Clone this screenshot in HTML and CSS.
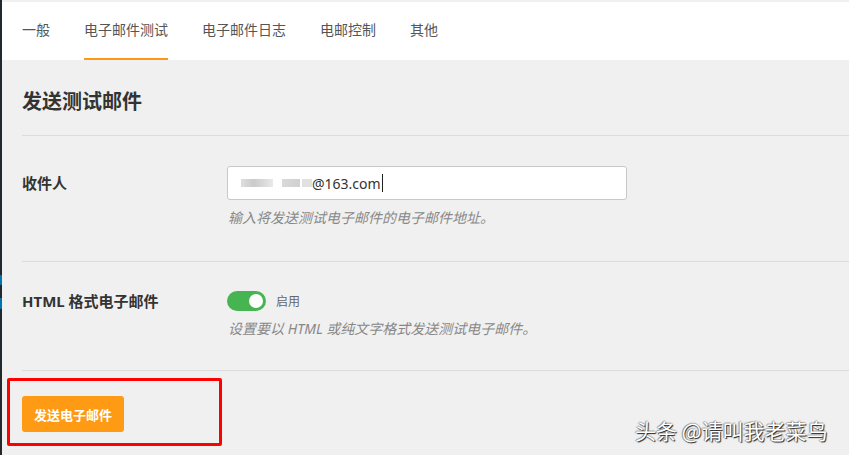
FILE: index.html
```html
<!DOCTYPE html>
<html lang="zh-CN">
<head>
<meta charset="utf-8">
<link rel="stylesheet" href="styles.css">
</head>
<body>
<div class="frame">
  <div class="adminbar"><span class="blue b1"></span><span class="blue b2"></span></div>
  <div class="page">
    <nav class="tabs">
      <a class="tab">一般</a>
      <a class="tab active">电子邮件测试</a>
      <a class="tab">电子邮件日志</a>
      <a class="tab">电邮控制</a>
      <a class="tab">其他</a>
    </nav>
    <main class="content">
      <h2 class="title">发送测试邮件</h2>
      <div class="row row-to">
        <div class="label">收件人</div>
        <div class="field">
          <div class="input"><span class="blur b-a"></span><span class="blur b-b"></span><span class="blur b-c"></span><span class="email">@163.com</span><span class="caret"></span></div>
          <p class="help">输入将发送测试电子邮件的电子邮件地址。</p>
        </div>
      </div>
      <div class="row row-html">
        <div class="label">HTML 格式电子邮件</div>
        <div class="field">
          <div class="switch-line"><span class="switch"><span class="knob"></span></span><span class="switch-text">启用</span></div>
          <p class="help">设置要以 HTML 或纯文字格式发送测试电子邮件。</p>
        </div>
      </div>
      <div class="actions">
        <button class="btn">发送电子邮件</button>
        <span class="highlight"></span>
      </div>
    </main>
  </div>
  <div class="watermark">头条 @请叫我老菜鸟</div>
</div>
</body>
</html>
```

FILE: styles.css
```css
* { box-sizing: border-box; }
html, body { margin: 0; padding: 0; }
body {
  width: 849px;
  height: 455px;
  overflow: hidden;
  background: #f0f0f0;
  font-family: "Noto Sans", "Noto Sans CJK SC", sans-serif;
  color: #333;
}
.frame {
  position: relative;
  display: flex;
  height: 455px;
}
.adminbar {
  position: relative;
  width: 2px;
  flex: none;
  background: #23282d;
}
.blue {
  position: absolute;
  left: 0;
  width: 2px;
  background: #0073aa;
}
.b1 { top: 275px; height: 10px; }
.b2 { top: 298px; height: 11px; }
.page {
  flex: 1;
  display: flex;
  flex-direction: column;
  padding-top: 2px;
}
.tabs {
  display: flex;
  gap: 34px;
  height: 58px;
  background: #fff;
  padding-left: 20px;
}
.tab {
  font-size: 14px;
  color: #555;
  height: 58px;
  border-bottom: 2px solid transparent;
  line-height: 56px;
}
.tab.active {
  border-bottom-color: #ff9615;
}
.content {
  padding: 0 0 0 20px;
  flex: 1;
}
.title {
  margin: 0;
  font-size: 20px;
  font-weight: 700;
  color: #333;
  height: 76px;
  line-height: 84px;
  border-bottom: 1px solid #dcdcdc;
}
.row {
  display: flex;
  border-bottom: 1px solid #dcdcdc;
}
.row-to { height: 126px; padding-top: 30px; }
.row-html { height: 109px; padding-top: 29px; }
.label {
  width: 205px;
  flex: none;
  font-size: 15px;
  font-weight: 700;
  color: #333;
  line-height: 34px;
}
.row-html .label { line-height: 20px; }
.field { flex: none; }
.input {
  width: 400px;
  height: 34px;
  background: #fff;
  border: 1px solid #c8c8c8;
  border-radius: 3px;
  display: flex;
  align-items: center;
  padding-left: 13px;
}
.blur {
  display: inline-block;
  height: 8px;
  background: #c9c9c9;
  opacity: 0.8;
}
.b-a { width: 32px; background: linear-gradient(90deg, #d6d6d6, #bdbdbd 40%, #d0d0d0 70%, #e4e4e4); margin-right: 9px; }
.b-b { width: 18px; background: linear-gradient(90deg, #d0d0d0, #c4c4c4); margin-right: 2px; }
.b-c { width: 10px; background: #d9d9d9; }
.email {
  font-size: 14px;
  color: #333;
}
.caret {
  display: inline-block;
  width: 1px;
  height: 18px;
  background: #222;
  margin-left: 1px;
}
.help {
  margin: 9px 0 0 1px;
  font-size: 14px;
  font-style: italic;
  color: #888;
  line-height: 18px;
}
.switch-line {
  display: flex;
  align-items: center;
  height: 20px;
}
.switch {
  position: relative;
  width: 39px;
  height: 20px;
  border-radius: 10px;
  background: #46b450;
}
.knob {
  position: absolute;
  right: 3px;
  top: 3px;
  width: 14px;
  height: 14px;
  border-radius: 50%;
  background: #fff;
}
.switch-text {
  margin-left: 10px;
  font-size: 12px;
  color: #666;
}
.actions {
  position: relative;
  padding-top: 25px;
}
.btn {
  height: 36px;
  padding: 0 12px;
  border: none;
  border-radius: 3px;
  background: #ff9a14;
  color: #fff;
  font-family: "Noto Sans", "Noto Sans CJK SC", sans-serif;
  font-size: 13px;
  font-weight: 700;
}
.highlight {
  position: absolute;
  left: -15px;
  top: 7px;
  width: 215px;
  height: 68px;
  border: 3px solid #ff0000;
  border-radius: 2px;
}
.watermark {
  position: absolute;
  left: 635px;
  top: 415px;
  font-size: 21px;
  color: #fff;
  text-shadow: 1px 1px 1px #222, -1px 0 1px rgba(0,0,0,0.4), 0 -1px 1px rgba(0,0,0,0.25);
  font-family: "Noto Sans CJK SC", sans-serif;
  white-space: nowrap;
}
```
